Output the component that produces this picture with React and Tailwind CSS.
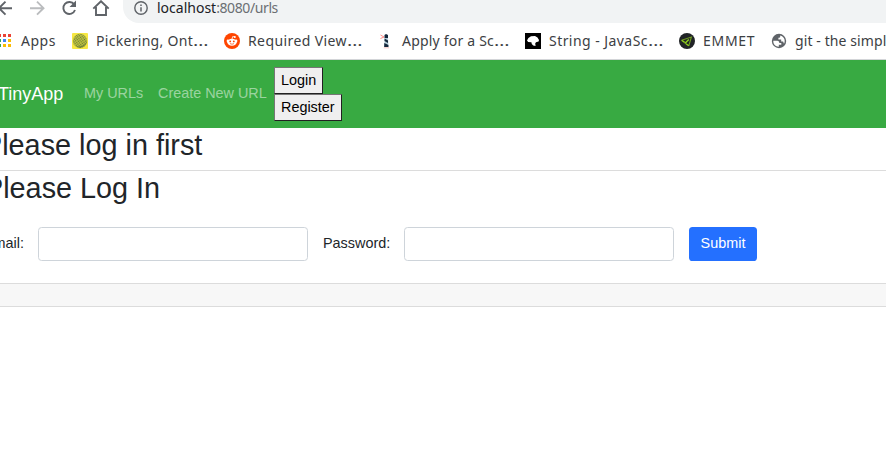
import React from "react";

const ui = "font-['Noto_Sans','Open_Sans',sans-serif]";

const AppsIcon = () => (
  <svg className="size-4 shrink-0" viewBox="0 0 16 16" shapeRendering="crispEdges">
    {["#ea4335", "#ea4335", "#ea4335", "#34a853", "#4285f4", "#fbbc04", "#34a853", "#fbbc04", "#fbbc04"].map((c, i) => (
      <rect key={i} x={1 + (i % 3) * 5} y={1 + Math.floor(i / 3) * 5} width="3" height="3" fill={c} />
    ))}
  </svg>
);

const PickeringIcon = () => (
  <svg className="size-4 shrink-0" viewBox="0 0 16 16">
    <defs>
      <pattern id="weave" width="2" height="2" patternUnits="userSpaceOnUse" patternTransform="rotate(-35)">
        <rect width="2" height="2" fill="#c5c83e" />
        <rect width="1.2" height="1.2" fill="#67793a" />
      </pattern>
    </defs>
    <rect width="16" height="16" rx="1" fill="#f6e742" />
    <circle cx="8" cy="8" r="7.2" fill="url(#weave)" />
    <path d="M15 6C15 12 9 14 4 13C8 17 15 14 15 6Z" fill="#58703b" opacity=".6" />
  </svg>
);

const RedditIcon = () => (
  <svg className="size-4 shrink-0" viewBox="0 0 16 16">
    <circle cx="8" cy="8" r="8" fill="#ff4500" />
    <path d="M8 6L8.7 3.5L11 4" fill="none" stroke="#fff" strokeWidth=".8" />
    <circle cx="10.8" cy="4" r="1" fill="#fff" />
    <circle cx="3.9" cy="7.9" r="1.3" fill="#fff" />
    <circle cx="12.1" cy="7.9" r="1.3" fill="#fff" />
    <ellipse cx="8" cy="9.2" rx="4.7" ry="3.5" fill="#fff" />
    <circle cx="6.2" cy="8.4" r=".9" fill="#ff4500" />
    <circle cx="9.8" cy="8.4" r=".9" fill="#ff4500" />
    <path d="M6 10.6Q8 11.8 10 10.6" fill="none" stroke="#ff4500" strokeWidth=".7" />
  </svg>
);

const LighthouseIcon = () => (
  <svg className="size-4 shrink-0" viewBox="0 0 16 16">
    <path d="M2.5 2L6 4M2.5 5.5L6 4" stroke="#ff8d88" strokeWidth="1" />
    <path d="M6.5 2L8 1L10 2V5H6.5Z" fill="#15283c" />
    <path d="M6.7 5H10L10.6 14H6.2Z" fill="#b4ccd8" />
    <path d="M6.6 5.5L10 7.5V10L6.5 8ZM6.3 10L10.4 12V14H6.2Z" fill="#15283c" />
    <path d="M5.8 14.8H11" stroke="#f0b4b4" strokeWidth=".8" />
  </svg>
);

const MdnIcon = () => (
  <svg className="size-4 shrink-0" viewBox="0 0 16 16">
    <rect width="16" height="16" />
    <path d="M2 7.5L3.4 5L6 3.3L10 3L12.5 4.5L14 7L13.6 8.6L11 9.2L10.2 10.4L10.6 13L8.2 12.4L6.8 11L6.4 9.2L3.2 9Z" fill="#fff" />
  </svg>
);

const EmmetIcon = () => (
  <svg className="size-4 shrink-0" viewBox="0 0 16 16">
    <circle cx="8" cy="8" r="8" fill="#202326" />
    <path d="M2.6 7.2L12.4 4L9.8 12.8" fill="none" stroke="#6f9c22" strokeWidth="1.1" />
    <path d="M2.6 7.2L5.6 9.4M9.8 12.8L7 10.8M9.8 6.4L5.8 10.4" stroke="#8fd01c" strokeWidth="1.4" />
  </svg>
);

const GlobeIcon = () => (
  <svg className="size-4 shrink-0" viewBox="0 0 16 16">
    <circle cx="8" cy="8" r="7.2" fill="#5f6368" />
    <path d="M2.3 7.8H6.3C7.8 7.8 8.3 8.8 8.3 10H10.3V11.8H7.8V13.8C4.6 13.7 2.1 11.3 2.3 7.8ZM9.2 2.4V3.4C9.2 4.4 8.6 4.8 7.4 4.8V6.4H10.2V8.6H12.1L13 10.8C14.8 7.5 13.2 3.4 9.2 2.4Z" fill="#fff" />
  </svg>
);

const bookmarks = [
  { icon: AppsIcon, text: "Apps", box: "w-[75px] gap-2", track: "tracking-[0.5px]" },
  { icon: PickeringIcon, text: "Pickering, Ont", more: true, box: "w-[152px] gap-2", track: "tracking-[0.3px]" },
  { icon: RedditIcon, text: "Required View", more: true, box: "w-[154px] gap-2", track: "tracking-[0.4px]" },
  { icon: LighthouseIcon, text: "Apply for a Sc", more: true, box: "w-[147px] gap-2", track: "tracking-[0.2px]" },
  { icon: MdnIcon, text: "String - JavaSc", more: true, box: "w-[154px] gap-2", track: "tracking-[0.45px]" },
  { icon: EmmetIcon, text: "EMMET", box: "w-[92px] gap-2", track: "tracking-[0.7px]" },
  { icon: GlobeIcon, text: "git - the simple guide", box: "w-[190px] gap-2", track: "tracking-[0.1px]" },
];

function BrowserBar() {
  return (
    <header className={`${ui} h-[60px] overflow-hidden border-b border-[#d3d5d8] bg-white`}>
      <div className="flex h-[23px]">
        <svg className="h-[23px] w-[123px] shrink-0" viewBox="0 0 123 23" fill="none" stroke="#5f6368" strokeWidth="1.9">
          <path d="M12 8.2H-1M5.5 1.7L-1 8.2L5.5 14.7" />
          <path d="M30 8.2H43.5M37 1.7L43.5 8.2L37 14.7" stroke="#babcbe" />
          <path d="M74.2 4.4A6 6 0 1 0 75 10" />
          <path d="M76 0.5V7H69.5Z" fill="#5f6368" stroke="none" />
          <path d="M93.3 8.6L101 1.2L108.7 8.6M96 7V15H106V7" />
        </svg>
        <div className="flex h-[23px] flex-1 rounded-bl-[16px] bg-[#f1f3f4] pl-[11px]">
          <svg className="mt-[1px] size-[14px]" viewBox="0 0 14 14" fill="none" stroke="#5f6368">
            <circle cx="7" cy="7" r="6.2" strokeWidth="1.4" />
            <path d="M7 6.2V10.4M7 3.6V5" strokeWidth="1.5" />
          </svg>
          <span className="ml-[9px] whitespace-nowrap text-[14px] leading-4 tracking-[-0.4px] text-[#6b6f73]">
            <span className="tracking-normal text-[#202124]">localhost</span>:8080/urls
          </span>
        </div>
      </div>
      <div className="-ml-[3px] mt-[8px] flex h-5 w-[970px] items-center">
        {bookmarks.map(({ icon: Icon, text, more, box, track }) => (
          <div key={text} className={`flex shrink-0 items-center whitespace-nowrap text-[14px] leading-5 text-[#3c4043] ${box}`}>
            <Icon />
            <span className={track}>
              {text}
              {more && <span className="inline-block origin-left scale-x-[1.4] tracking-normal">…</span>}
            </span>
          </div>
        ))}
      </div>
    </header>
  );
}

const pageButton = "h-[27px] border border-t-[#767676] border-l-[#767676] border-r-[#212121] border-b-[#212121] bg-[#efefef] px-[6px] pb-[2px] text-[14.4px] leading-[22px] text-black";

export default function App() {
  return (
    <div className="h-[453px] w-[886px] overflow-hidden bg-white font-['Liberation_Sans',Arial,sans-serif] text-[14.4px] text-[#212529]">
      <BrowserBar />
      <nav className="flex h-[68px] items-center whitespace-nowrap bg-[#38aa42]">
        <a className="-ml-[2px] w-[86px] text-[18px] text-white">TinyApp</a>
        <a className="w-[74px] text-white/50">My URLs</a>
        <a className="w-[116px] text-white/50">Create New URL</a>
        <div className="flex flex-col items-start">
          <button className={pageButton}>Login</button>
          <button className={pageButton}>Register</button>
        </div>
      </nav>
      <h2 className="-ml-[17px] h-[42px] text-[28.8px] leading-[34.5px]">Please log in first</h2>
      <section className="h-[137px] border-y border-[#dcdcdc]">
        <div className="h-[113px]">
          <h2 className="-ml-4 h-14 text-[28.8px] leading-[34.5px]">Please Log In</h2>
          <form className="-ml-4 flex h-[34px] items-center">
            <label className="w-[54px]">Email:</label>
            <input className="h-[34px] w-[270px] rounded-[3.6px] border border-[#ced4da] bg-white" />
            <label className="ml-[15px] w-[81px]">Password:</label>
            <input className="h-[34px] w-[270px] rounded-[3.6px] border border-[#ced4da] bg-white" />
            <button type="button" className="ml-[15px] h-[34px] w-[68px] rounded-[3.6px] bg-[#2470ff] text-white">Submit</button>
          </form>
        </div>
        <div className="-mt-[1px] h-[23px] border-t border-[#dcdcdc] bg-[#f7f7f7]" />
      </section>
    </div>
  );
}
